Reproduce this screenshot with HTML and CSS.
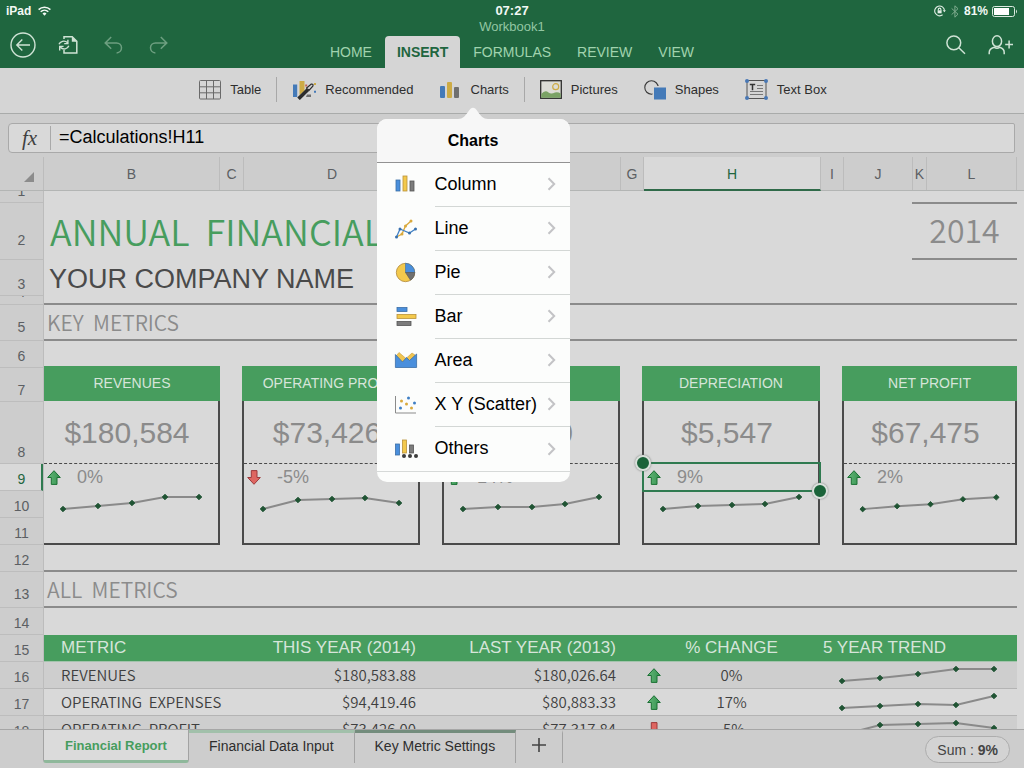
FILE: index.html
```html
<!DOCTYPE html>
<html lang="en">
<head>
<meta charset="utf-8">
<title>Workbook1</title>
<link rel="stylesheet" href="styles.css">
</head>
<body>
<svg class="defs" aria-hidden="true">
  <defs>
    <marker id="dot" viewBox="0 0 8 8" refX="4" refY="4" markerWidth="7" markerHeight="7" markerUnits="userSpaceOnUse"><path d="M4 .8 7.2 4 4 7.2 .8 4z" fill="#1f5433" stroke="#1f5433" stroke-linejoin="round"/></marker>
    <linearGradient id="green" x1="0" y1="0" x2="1" y2="0"><stop offset="0" stop-color="#62b878"/><stop offset="1" stop-color="#379150"/></linearGradient>
    <symbol id="up" viewBox="0 0 14 15"><path d="M7 .7 13.3 7.5H10V14.4H4.3V7.5H.7z" fill="url(#green)" stroke="#1b7034"/></symbol>
    <symbol id="down" viewBox="0 0 14 15"><path d="M7 14.3 13.3 7.5H10V.6H4.3V7.5H.7z" fill="#de6661" stroke="#9c3a3c"/></symbol>
    <symbol id="chev" viewBox="0 0 9 14"><path d="M1.5 1.2 7.2 7 1.5 12.8" fill="none" stroke="#c3c3c6" stroke-width="2"/></symbol>
  </defs>
</svg>

<header class="top">
  <div class="side">
    <div class="status"><span>iPad</span>
      <svg width="13" height="10" viewBox="0 0 13 10" fill="none" stroke="#f2f8f4" stroke-width="1.5"><path d="M.6 3.6a8.6 8.6 0 0 1 11.8 0M2.7 5.8a5.6 5.6 0 0 1 7.6 0"/><path d="M4.5 7.4a3.2 3.2 0 0 1 4 0L6.5 9.7z" fill="#f2f8f4" stroke="none"/></svg>
    </div>
    <div class="tools">
      <button aria-label="Back"><svg width="26" height="26" viewBox="0 0 26 26" fill="none" stroke="#cfe3d5" stroke-width="1.4"><circle cx="13" cy="13" r="12"/><path d="M20 13H7M12.3 7.5 6.8 13l5.5 5.5"/></svg></button>
      <button aria-label="File"><svg width="20" height="20" viewBox="0 0 20 20" fill="none" stroke="#cfe3d5" stroke-width="1.5"><path d="M6 4V1.8H14.2L18.8 6.4V18H6V15"/><path d="M13.8 1.5V6.8H19z" fill="#cfe3d5" stroke="none"/><path d="M1 9.3C2 6.5 6.500 4.800 9.300 7.600M9.900 4.800V8.600H6.200M10.800 10.800C9.700 14 5.200 15.200 2.400 12.300M1.700 15.500V11.400H5.600" stroke-width="1.4"/></svg></button>
      <button aria-label="Undo"><svg width="19" height="18" viewBox="0 0 19 18" fill="none" stroke="#6d9f80" stroke-width="1.5"><path d="M7.200 1 1.200 6.900 7.200 12.800M1.500 6.900H12.500A5 5 0 0 1 17.500 11.800C17.500 14.500 15.500 16.800 12.600 16.900"/></svg></button>
      <button aria-label="Redo"><svg width="19" height="18" viewBox="0 0 19 18" fill="none" stroke="#6d9f80" stroke-width="1.500"><path d="M11.800 1 17.800 6.900 11.800 12.800M17.500 6.900H6.500A5 5 0 0 0 1.500 11.800C1.500 14.500 3.500 16.800 6.400 16.900"/></svg></button>
    </div>
  </div>
  <div class="middle">
    <div class="clock">07:27</div>
    <div class="doc">Workbook1</div>
    <nav class="tabs">
      <button>HOME</button><button class="on">INSERT</button><button>FORMULAS</button><button>REVIEW</button><button>VIEW</button>
    </nav>
  </div>
  <div class="side end">
    <div class="status">
      <svg width="12" height="12" viewBox="0 0 12 12" fill="none" stroke="#e3efe7" stroke-width="1.100"><path d="M10.500 5.500A4.900 4.900 0 1 0 8.600 9.800"/><path d="M8.700 5.200h3.200L10.400 7.300z" fill="#e3efe7" stroke="none"/><rect x="3.600" y="5.300" width="4" height="3" fill="#e3efe7" stroke="none"/><path d="M4.300 5.500V4.400a1.300 1.300 0 0 1 2.600 0v1.100"/></svg>
      <svg class="bt" width="8" height="13" viewBox="0 0 8 13" fill="none" stroke="#7fab8f"><path d="M.6 3.400 7 9.200 3.900 12.200V.8L7 3.700.6 9.600"/></svg>
      <span>81%</span>
      <svg width="26" height="11" viewBox="0 0 26 11"><rect x=".5" y=".5" width="22" height="10" rx="2" fill="none" stroke="#dcebe1"/><rect x="2" y="2" width="15" height="7" fill="#fff"/><path d="M24 3.500q2 2 0 4z" fill="#dcebe1"/></svg>
    </div>
    <div class="tools">
      <button aria-label="Search"><svg width="20" height="20" viewBox="0 0 20 20" fill="none" stroke="#cfe3d5" stroke-width="1.500"><circle cx="7.800" cy="7.800" r="6.900"/><path d="M12.800 12.800 19 18.800"/></svg></button>
      <button aria-label="Share"><svg width="26" height="20" viewBox="0 0 26 20" fill="none" stroke="#cfe3d5" stroke-width="1.500"><ellipse cx="9" cy="6.200" rx="4.600" ry="5.400"/><path d="M1.200 19.300V17.500C1.200 14.500 3 13.200 6.300 12.300Q9 14 11.700 12.300C15 13.200 16.200 14.500 16.200 17.500V19.300M17.200 9.500H25M21.100 5.500V13.500"/></svg></button>
    </div>
  </div>
</header>

<div class="ribbon">
  <button><svg width="22" height="20" viewBox="0 0 22 20" fill="none" stroke="#6a6a6a"><rect x=".5" y=".5" width="21" height="18.500" rx="1"/><path d="M.5 6.800h21M.5 12.800h21M7.500.5v18.500M14.500.5v18.500"/></svg>Table</button>
  <i class="sep"></i>
  <button><svg width="24" height="20" viewBox="0 0 24 20"><path d="M1 4.500h4.200V17H1z" fill="#447ab8"/><path d="M7.500 1h5v10l-5 4z" fill="#cdab45"/><path d="M15 14.500h4V17H14z" fill="#707070"/><path d="M6.500 18.800 16 9.500" stroke="#2d2d2d" stroke-width="3.600"/><path d="M14.600 8 19 4.200Q21.800 3.500 20.800 6.200L17 10.400z" fill="#d5d5d5" stroke="#2d2d2d" stroke-width="1.200"/><path d="M13.200 4.500h2v2h-2z" fill="#c26050"/><path d="M22 3h2v2h-2z" fill="#cdab45"/><path d="M22 10.800h2v2h-2z" fill="#447ab8"/></svg>Recommended</button>
  <div class="anchor">
    <button class="charts" aria-expanded="true"><svg width="20" height="18" viewBox="0 0 20 18"><rect x="0" y="5" width="5" height="12" rx="1" fill="#447ab8"/><rect x="7" y="1" width="5" height="16" rx="1" fill="#cdab45"/><rect x="14" y="6" width="5" height="11" rx="1" fill="#707070"/></svg>Charts</button>
    <div class="pop">
      <svg class="tip" width="30" height="12" viewBox="0 0 30 12"><path d="M0 12C5 12 7 9 10 5Q15-3.500 20 5C23 9 25 12 30 12z" fill="#f7f7f7"/></svg>
      <h2>Charts</h2>
      <ul>
        <li><svg width="24" height="22" viewBox="0 0 24 22"><g stroke-width=".8"><rect x="2" y="6" width="4" height="11" fill="#4a8fdc" stroke="#3b6ea6"/><rect x="9" y="2" width="4" height="15" fill="#f3c94c" stroke="#b9923a"/><rect x="16" y="7" width="4" height="10" fill="#7c7c7c" stroke="#555"/></g></svg><button>Column<svg width="9" height="14"><use href="#chev"/></svg></button></li>
        <li><svg width="24" height="22" viewBox="0 0 24 22"><g fill="none"><path d="M2.500 19 8 16 11.500 8 17 3" stroke="#d9a93c" stroke-width="1.300"/><path d="M2.500 19 6 11 15.500 15 21.500 11" stroke="#3f7fc4" stroke-width="1.300"/></g><g fill="#d9a93c"><circle cx="8" cy="16" r="1.500"/><circle cx="11.500" cy="8" r="1.500"/><circle cx="17" cy="3" r="1.500"/></g><g fill="#356fae"><circle cx="2.500" cy="19" r="1.500"/><circle cx="6" cy="11" r="1.500"/><circle cx="15.500" cy="15" r="1.500"/><circle cx="21.500" cy="11" r="1.500"/></g></svg><button>Line<svg width="9" height="14"><use href="#chev"/></svg></button></li>
        <li><svg width="24" height="22" viewBox="0 0 24 22"><circle cx="11.500" cy="10.500" r="9.200" fill="#f3c94c" stroke="#b0883a" stroke-width=".8"/><path d="M11.500 10.500V1.300A9.200 9.200 0 0 1 20.700 10.500z" fill="#4a8fdc" stroke="#3b6ea6" stroke-width=".6"/><path d="M11.500 10.500H20.700A9.200 9.200 0 0 1 16.500 18.200z" fill="#707070" stroke="#555" stroke-width=".6"/></svg><button>Pie<svg width="9" height="14"><use href="#chev"/></svg></button></li>
        <li><svg width="24" height="22" viewBox="0 0 24 22"><g stroke-width=".8"><rect x="3" y="1.500" width="10" height="4" fill="#4a8fdc" stroke="#3b6ea6"/><rect x="3" y="8.500" width="19" height="4" fill="#f3c94c" stroke="#b9923a"/><rect x="3" y="15.500" width="14" height="4" fill="#7c7c7c" stroke="#555"/></g></svg><button>Bar<svg width="9" height="14"><use href="#chev"/></svg></button></li>
        <li><svg width="24" height="22" viewBox="0 0 24 22"><path d="M2.500 5.500 5 2.500 12 8.500 18 3 21 5V9L12 15 3 9z" fill="#f0c550" stroke="#c79c3c" stroke-width=".6"/><path d="M1.400 4.500 8.500 12 12.500 7.500 15.500 10.500 22.600 4V17.500H1.400z" fill="#4a8fdc" stroke="#3b6ea6" stroke-width=".8"/></svg><button>Area<svg width="9" height="14"><use href="#chev"/></svg></button></li>
        <li><svg width="24" height="22" viewBox="0 0 24 22"><path d="M1.500 2V19H22" fill="none" stroke="#8b8b8b"/><g fill="#3f7fc4"><circle cx="14.500" cy="4" r="1.500"/><circle cx="20.500" cy="9" r="1.500"/><circle cx="6.500" cy="14" r="1.500"/></g><g fill="#d9a93c"><circle cx="7.500" cy="7" r="1.500"/><circle cx="12.500" cy="10" r="1.500"/><circle cx="17.500" cy="14" r="1.500"/></g></svg><button>X Y (Scatter)<svg width="9" height="14"><use href="#chev"/></svg></button></li>
        <li><svg width="24" height="22" viewBox="0 0 24 22"><g stroke-width=".8"><rect x="1.500" y="6" width="4" height="11" fill="#4a8fdc" stroke="#3b6ea6"/><rect x="8.500" y="2" width="4" height="13" fill="#f3c94c" stroke="#b9923a"/><rect x="15.500" y="7" width="4" height="8" fill="#7c7c7c" stroke="#555"/></g><g fill="#3c3c3c"><circle cx="10" cy="18" r="2"/><circle cx="16" cy="18" r="2"/><circle cx="22" cy="18" r="2"/></g></svg><button>Others<svg width="9" height="14"><use href="#chev"/></svg></button></li>
      </ul>
    </div>
  </div>
  <i class="sep"></i>
  <button><svg width="22" height="19" viewBox="0 0 22 19"><rect x=".7" y=".7" width="20.600" height="17.600" fill="#dcdcd6" stroke="#2f2f2f" stroke-width="1.300"/><path d="M1.300 14Q5 9.500 8.500 12.500 11 14.500 15 12.500 18 11.800 20.700 13.500V17.700H1.300z" fill="#7aa265"/><circle cx="15.700" cy="6.700" r="3" fill="none" stroke="#cdab45" stroke-width="1.200"/></svg>Pictures</button>
  <button><svg width="22" height="20" viewBox="0 0 22 20"><circle cx="7.500" cy="7.500" r="6.700" fill="none" stroke="#3a3a3a" stroke-width="1.100"/><rect x="8.500" y="6" width="14" height="14" fill="#d5d5d5"/><rect x="10" y="7.500" width="12" height="12" fill="#447ab8"/></svg>Shapes</button>
  <button><svg width="23" height="21" viewBox="0 0 23 21"><path d="M2 1.500H21V19.500H2z" fill="none" stroke="#555"/><g fill="#4878b5"><circle cx="2" cy="2" r="2"/><circle cx="21" cy="2" r="2"/><circle cx="2" cy="19" r="2"/><circle cx="21" cy="19" r="2"/></g><path d="M4.800 5.500H10.200M7.500 5.500V11.200" stroke="#333" stroke-width="1.500"/><path d="M12 6.500h6M12 9.500h6M5 12.500h13M5 15.500h13" stroke="#777"/></svg>Text Box</button>
</div>

<div class="formula">
  <div class="fbox"><label for="fx">fx</label><input id="fx" value="=Calculations!H11"></div>
</div>

<div class="cols">
  <div class="corner"><svg width="10" height="10" viewBox="0 0 10 10"><path d="M10 0V10H0z" fill="#8c8c8c"/></svg></div>
  <div class="colgrid"><span>B</span><span>C</span><span>D</span><span>E</span><span>F</span><span>G</span><span class="on">H</span><span>I</span><span>J</span><span>K</span><span>L</span></div>
</div>

<main class="sheet">
  <div class="rows">
    <span class="r1">1</span><span class="r2">2</span><span class="r3">3</span><span class="r4">4</span><span class="r5">5</span><span>6</span><span class="r7">7</span><span class="r8">8</span><span class="on">9</span><span>10</span><span>11</span><span>12</span><span class="r5">13</span><span>14</span><span>15</span><span>16</span><span>17</span><span>18</span>
  </div>
  <div class="cells">
    <div class="title"><h1>ANNUAL&nbsp; FINANCIAL&nbsp; REPORT</h1><div class="year">2014</div></div>
    <div class="company">YOUR COMPANY NAME</div>
    <h3 class="section">KEY&nbsp; METRICS</h3>
    <div class="cards">
      <section class="card first"><h4>REVENUES</h4><div class="value">$180,584</div><div class="pct"><svg width="14" height="15"><use href="#up"/></svg>0%</div>
        <svg class="spark" viewBox="0 0 174 52"><polyline points="19,18 54,15 88,12 121,6 155,6"/></svg></section>
      <section class="card"><h4>OPERATING PROFIT</h4><div class="value">$73,426</div><div class="pct"><svg width="14" height="15"><use href="#down"/></svg>-5%</div>
        <svg class="spark" viewBox="0 0 174 52"><polyline points="19,18 54,9 88,8 121,7 155,12"/></svg></section>
      <section class="card"><h4>INTEREST</h4><div class="value">$3,600</div><div class="pct"><svg width="14" height="15"><use href="#up"/></svg>14%</div>
        <svg class="spark" viewBox="0 0 174 52"><polyline points="19,18 54,16 88,16 121,13 155,6"/></svg></section>
      <section class="card"><h4>DEPRECIATION</h4><div class="value">$5,547</div><div class="pct"><svg width="14" height="15"><use href="#up"/></svg>9%<div class="selection"></div></div>
        <svg class="spark" viewBox="0 0 174 52"><polyline points="19,18 54,15 88,14 121,13 155,6"/></svg></section>
      <section class="card"><h4>NET PROFIT</h4><div class="value">$67,475</div><div class="pct"><svg width="14" height="15"><use href="#up"/></svg>2%</div>
        <svg class="spark" viewBox="0 0 174 52"><polyline points="19,18 54,15 88,13 121,8 155,6"/></svg></section>
    </div>
    <h3 class="section">ALL&nbsp; METRICS</h3>
    <table>
      <colgroup><col class="c1"><col class="c2"><col class="c3"><col class="c4"><col class="c5"></colgroup>
      <thead><tr><th>METRIC</th><th>THIS YEAR (2014)</th><th>LAST YEAR (2013)</th><th>% CHANGE</th><th>5 YEAR TREND</th></tr></thead>
      <tbody>
        <tr><td>REVENUES</td><td>$180,583.88</td><td>$180,026.64</td><td><div class="chg"><svg width="14" height="15"><use href="#up"/></svg><span>0%</span></div></td><td><svg class="spark" viewBox="0 0 197 26"><polyline points="22,19 60,16 98,12 136,7 174,7"/></svg></td></tr>
        <tr><td>OPERATING&nbsp; EXPENSES</td><td>$94,419.46</td><td>$80,883.33</td><td><div class="chg"><svg width="14" height="15"><use href="#up"/></svg><span>17%</span></div></td><td><svg class="spark" viewBox="0 0 197 26"><polyline points="22,19 60,17 98,15 136,16 174,7"/></svg></td></tr>
        <tr><td>OPERATING&nbsp; PROFIT</td><td>$73,426.00</td><td>$77,317.84</td><td><div class="chg"><svg width="14" height="15"><use href="#down"/></svg><span>-5%</span></div></td><td><svg class="spark" viewBox="0 0 197 26"><polyline points="22,19 60,9 98,8 136,7 174,12"/></svg></td></tr>
      </tbody>
    </table>
  </div>
</main>

<footer>
  <button class="stab on">Financial Report</button>
  <button class="stab light">Financial Data Input</button>
  <button class="stab dark">Key Metric Settings</button>
  <button class="stab add" aria-label="Add sheet"><svg width="14" height="14" viewBox="0 0 14 14"><path d="M0 7h14M7 0v14" stroke="#444" stroke-width="1.600"/></svg></button>
  <button class="sum">Sum : <b>9%</b></button>
</footer>
</body>
</html>
```
FILE: styles.css
```css
* { box-sizing: border-box; }
body {
  margin: 0;
  height: 100vh;
  display: flex;
  flex-direction: column;
  overflow: hidden;
  background: #d9d9d9;
  font-family: "Liberation Sans", Arial, sans-serif;
  font-size: 14px;
  color: #2e2e2e;
}
button { font: inherit; color: inherit; background: none; border: 0; padding: 0; margin: 0; }
svg { display: block; flex: none; }
h1, h2, h3, h4, ul { margin: 0; padding: 0; font-weight: 400; }
ul { list-style: none; }
.defs { position: absolute; width: 0; height: 0; }

/* Title bar */
.top { display: grid; grid-template-columns: 1fr auto 1fr; height: 68px; background: #1f663f; flex: none; }
.status { display: flex; align-items: center; gap: 7px; height: 22px; padding-left: 6px; font-size: 12px; font-weight: bold; color: #f2f8f4; }
.tools { display: flex; align-items: center; height: 46px; padding-left: 10px; }
.tools button:nth-child(2) { margin-left: 22px; }
.tools button:nth-child(3) { margin-left: 26px; }
.tools button:nth-child(4) { margin-left: 26px; }
.end .status { justify-content: flex-end; padding: 0 6px 0 0; gap: 4px; }
.end .status .bt { margin: 0 1px; }
.end .tools { justify-content: flex-end; padding: 0 10px 0 0; }
.middle { display: flex; flex-direction: column; align-items: center; text-align: center; }
.clock { font-size: 13px; font-weight: bold; line-height: 22px; height: 20px; color: #f2f8f4; }
.doc { font-size: 13px; line-height: 14px; height: 16px; color: #93c7a3; }
.tabs { display: flex; height: 32px; }
.tabs button { padding: 0 13px; color: #a0d3ae; border-radius: 4px 4px 0 0; }
.tabs .on { background: #d5d5d5; color: #1f663f; font-weight: bold; padding: 0 12px; }

/* Ribbon */
.ribbon { display: flex; flex: none; justify-content: center; align-items: center; height: 46px; padding: 0 0 2px 2px; background: #d5d5d5; border-bottom: 1px solid #a9abaa; font-size: 13px; }
.ribbon > button, .charts { display: flex; align-items: center; gap: 9px; margin: 0 13px; }
.charts { gap: 11px; }
.sep { width: 1px; height: 25px; background: #a8a8a8; margin: 0 2px; }
.anchor { position: relative; }

/* Charts popover */
.pop { position: absolute; z-index: 5; top: 38px; left: -50px; width: 193px; background: #fcfdfc; border-radius: 10px; padding-bottom: 10px; color: #000; }
.tip { position: absolute; top: -12px; left: 81px; }
.pop h2 { font-size: 16px; font-weight: bold; line-height: 43px; text-align: center; background: #f7f7f7; border-bottom: 1px solid #929292; border-radius: 10px 10px 0 0; }
.pop li { display: flex; align-items: center; height: 44px; padding-left: 17px; gap: 17px; font-size: 18px; }
.pop li button { flex: 1; height: 44px; display: flex; align-items: center; justify-content: space-between; border-bottom: 1px solid #d3d7d5; padding-right: 14px; text-align: left; }
.pop li:last-child button { border: 0; }
.pop ul { border-bottom: 1px solid #d6d9d8; }

/* Formula bar */
.formula { flex: none; background: #cdcdcd; padding: 9px 9px 4px 8px; }
.fbox { display: flex; align-items: center; height: 30px; background: #d9d9d9; border: 1px solid #a9a9a9; border-radius: 4px 2px 2px 4px; }
.fbox label { width: 42px; height: 24px; border-right: 1px solid #a9a9a9; text-align: center; font: italic 21px/24px "Liberation Serif", serif; color: #3f3f3f; }
.fbox input { flex: 1; border: 0; outline: 0; background: none; padding: 0 8px 2px; font: 18px "Liberation Sans", Arial, sans-serif; color: #000; min-width: 0; }

/* Column headings */
.cols { display: flex; flex: none; height: 34px; background: #cdcdcd; border-bottom: 1px solid #b3b5b4; color: #5c5f63; }
.corner { width: 44px; border-right: 1px solid #bcbcbc; display: flex; align-items: flex-end; justify-content: flex-end; padding: 0 9px 8px 0; flex: none; }
.colgrid { flex: 1; display: grid; grid-template-columns: 176fr 24fr 177fr 23fr 177fr 23fr 177fr 23fr 69fr 14fr 90fr; margin-right: 7px; }
.colgrid span { text-align: center; line-height: 34px; border-right: 1px solid #bcbcbc; height: 33px; }
.colgrid .on { background: #d9d9d9; color: #1f663f; border-bottom: 2px solid #2f6a49; height: 34px; }

/* Sheet */
.sheet { display: flex; flex: 1; min-height: 0; overflow: hidden; }
.rows { width: 44px; flex: none; display: flex; flex-direction: column; background: #cdcdcd; border-right: 1px solid #bcbcbc; color: #5c5f63; }
.rows span { flex: none; height: 27px; display: flex; align-items: flex-end; justify-content: center; overflow: hidden; border-bottom: 1px solid #bdbdbd; line-height: 22px; }
.rows .r1 { height: 12px; }
.rows .r2 { height: 57px; padding-bottom: 8px; }
.rows .r3 { height: 36px; }
.rows .r4 { height: 9px; padding-bottom: 1px; }
.rows .r5 { height: 36px; padding-bottom: 2px; }
.rows .r7 { height: 34px; }
.rows .r8 { height: 62px; }
.rows .on { background: #d9d9d9; color: #1f663f; border-right: 2px solid #2f7a50; padding-left: 2px; }
.cells { flex: 1; min-width: 0; margin-right: 7px; }
.title { display: flex; justify-content: space-between; padding-top: 11px; }
h1, .year, .section, td { font-family: "Noto Sans CJK SC", "Noto Sans", sans-serif; }
h1 { font-size: 36px; font-weight: 350; line-height: 56px; color: #479d5e; padding-left: 6px; white-space: nowrap; }
.year { width: 105px; border: 2px solid #8b8b8b; border-width: 2px 0; font-size: 32px; font-weight: 350; line-height: 50px; height: 58px; text-align: center; color: #8b8b8b; }
.company { font-size: 27px; line-height: 38px; height: 43px; padding-left: 5px; color: #4a4a4a; }
.section { border: 2px solid #8b8b8b; border-width: 2px 0; font-size: 21px; font-weight: 350; line-height: 34px; padding-left: 3px; color: #8b8b8b; }

.cards { display: grid; grid-template-columns: 176fr 178fr 178fr 178fr 175fr; gap: 22px; padding: 25px 0; }
.card { border: 2px solid #4a4a4a; border-top: 0; min-width: 0; }
.card h4 { margin: 0 -2px; background: #479d5e; color: #d6e5da; line-height: 35px; text-align: center; white-space: nowrap; }
.card.first { border-left: 0; }
.card.first h4 { margin-left: 0; }
.value { height: 63px; line-height: 63px; border-bottom: 1px dashed #4a4a4a; font-size: 30px; text-align: center; padding-right: 8px; color: #8b8b8b; }
.pct { position: relative; display: flex; align-items: center; gap: 16px; height: 27px; padding-left: 3px; font-size: 18px; color: #8b8b8b; }
.spark { width: 100%; height: 52px; }
.spark polyline { fill: none; stroke: #8a8a8a; stroke-width: 2; marker-start: url(#dot); marker-mid: url(#dot); marker-end: url(#dot); }
.selection { position: absolute; top: -2px; right: -3px; bottom: -1px; left: -2px; border: 2px solid #2f7a50; }
.selection::before, .selection::after { content: ""; box-sizing: border-box; position: absolute; width: 16px; height: 16px; border: 2px solid #d9e0db; border-radius: 50%; background: #1a6339; box-shadow: 0 0 2px #777; }
.selection::before { top: -9px; left: -9px; }
.selection::after { right: -9px; bottom: -9px; }

table { width: 100%; margin-top: 27px; table-layout: fixed; border-collapse: separate; border-spacing: 0; white-space: nowrap; }
.c1 { width: 199px; } .c2 { width: 177px; } .c3 { width: 223px; } .c4 { width: 177px; } .c5 { width: 197px; }
th, td { height: 27px; padding: 0; text-align: right; }
th { background: #479d5e; border-bottom: 1px solid #a3c4ac; color: #d6e5da; font-size: 17px; font-weight: 400; line-height: 26px; }
td { border-bottom: 1px solid #b4b4b4; font-size: 15px; font-weight: 350; line-height: 26px; color: #3f3f3f; }
th:nth-child(1), td:nth-child(1) { text-align: left; padding-left: 17px; }
th:nth-child(2), td:nth-child(2) { padding-right: 4px; }
th:nth-child(3), td:nth-child(3) { padding-right: 27px; }
th:nth-child(4) { text-align: center; }
th:nth-child(5) { text-align: left; padding-left: 3px; }
tbody tr:nth-child(odd) { background: #cecece; }
.chg { display: grid; grid-template-columns: 22px 1fr 22px; align-items: center; justify-items: center; }
td .spark { height: 26px; }

/* Sheet tabs */
footer { display: flex; flex: none; height: 39px; padding-left: 43px; background: #cdcdcd; border-top: 1px solid #a6a6a6; }
.stab { height: 33px; padding: 0 20px 4px; border-right: 1px solid #a3a3a3; border-top: 3px solid transparent; }
.stab.on { background: #dbdbdb; color: #479d5e; font-size: 13px; font-weight: bold; border: 1px solid #a3a3a3; border-width: 0 1px 3px; border-bottom-color: #8fb89b; border-radius: 0 0 3px 3px; min-width: 146px; padding-bottom: 0; }
.light { border-top-color: #a1c0aa; }
.dark { border-top-color: #738c7c; }
.add { padding: 0 16px 6px; }
.sum { margin: 6px 14px 0 auto; height: 27px; padding: 0 11px; border: 1px solid #adadad; border-radius: 14px; background: #d3d3d3; color: #444; }
```
